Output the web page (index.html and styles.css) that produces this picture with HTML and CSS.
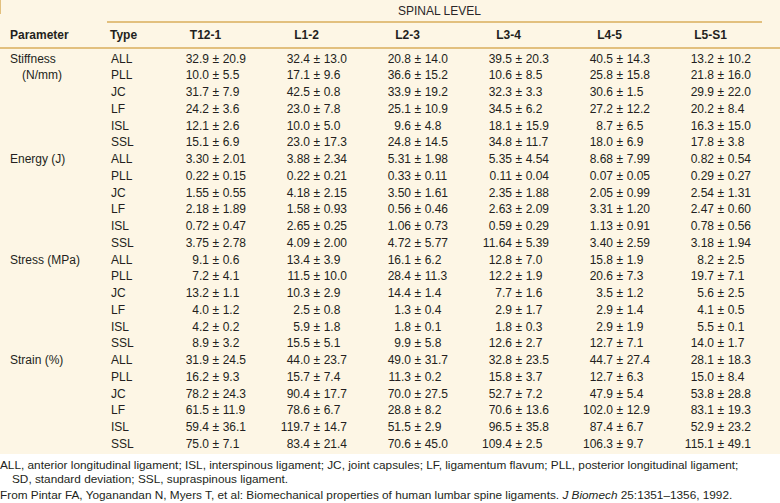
FILE: index.html
```html
<!DOCTYPE html>
<html lang="en">
<head>
<meta charset="utf-8">
<title>Spinal ligament properties</title>
<link rel="stylesheet" href="styles.css">
</head>
<body>
<div class="panel">
  <div class="spine-head">
    <span class="tick"></span>
    <div class="spine-rule"><span class="spine-title">SPINAL LEVEL</span></div>
  </div>
  <div class="grid head-row">
    <div class="h left">Parameter</div>
    <div class="h type">Type</div>
    <div class="h">T12-1</div>
    <div class="h">L1-2</div>
    <div class="h">L2-3</div>
    <div class="h">L3-4</div>
    <div class="h">L4-5</div>
    <div class="h">L5-S1</div>
  </div>
  <div class="grid body" id="body"></div>
</div>
<div class="notes">
  <p class="hang">ALL, anterior longitudinal ligament; ISL, interspinous ligament; JC, joint capsules; LF, ligamentum flavum; PLL, posterior longitudinal ligament;<br>SD, standard deviation; SSL, supraspinous ligament.</p>
  <p class="src">From Pintar FA, Yoganandan N, Myers T, et al: Biomechanical properties of human lumbar spine ligaments. <i>J Biomech</i> 25:1351&ndash;1356, 1992.</p>
</div>
<script src="app.js"></script>
</body>
</html>
```

FILE: app.js
```js
var data = [
  ["Stiffness (N/mm)", [
    ["ALL", "32.9 20.9|32.4 13.0|20.8 14.0|39.5 20.3|40.5 14.3|13.2 10.2"],
    ["PLL", "10.0 5.5|17.1 9.6|36.6 15.2|10.6 8.5|25.8 15.8|21.8 16.0"],
    ["JC", "31.7 7.9|42.5 0.8|33.9 19.2|32.3 3.3|30.6 1.5|29.9 22.0"],
    ["LF", "24.2 3.6|23.0 7.8|25.1 10.9|34.5 6.2|27.2 12.2|20.2 8.4"],
    ["ISL", "12.1 2.6|10.0 5.0|9.6 4.8|18.1 15.9|8.7 6.5|16.3 15.0"],
    ["SSL", "15.1 6.9|23.0 17.3|24.8 14.5|34.8 11.7|18.0 6.9|17.8 3.8"]
  ]],
  ["Energy (J)", [
    ["ALL", "3.30 2.01|3.88 2.34|5.31 1.98|5.35 4.54|8.68 7.99|0.82 0.54"],
    ["PLL", "0.22 0.15|0.22 0.21|0.33 0.11|0.11 0.04|0.07 0.05|0.29 0.27"],
    ["JC", "1.55 0.55|4.18 2.15|3.50 1.61|2.35 1.88|2.05 0.99|2.54 1.31"],
    ["LF", "2.18 1.89|1.58 0.93|0.56 0.46|2.63 2.09|3.31 1.20|2.47 0.60"],
    ["ISL", "0.72 0.47|2.65 0.25|1.06 0.73|0.59 0.29|1.13 0.91|0.78 0.56"],
    ["SSL", "3.75 2.78|4.09 2.00|4.72 5.77|11.64 5.39|3.40 2.59|3.18 1.94"]
  ]],
  ["Stress (MPa)", [
    ["ALL", "9.1 0.6|13.4 3.9|16.1 6.2|12.8 7.0|15.8 1.9|8.2 2.5"],
    ["PLL", "7.2 4.1|11.5 10.0|28.4 11.3|12.2 1.9|20.6 7.3|19.7 7.1"],
    ["JC", "13.2 1.1|10.3 2.9|14.4 1.4|7.7 1.6|3.5 1.2|5.6 2.5"],
    ["LF", "4.0 1.2|2.5 0.8|1.3 0.4|2.9 1.7|2.9 1.4|4.1 0.5"],
    ["ISL", "4.2 0.2|5.9 1.8|1.8 0.1|1.8 0.3|2.9 1.9|5.5 0.1"],
    ["SSL", "8.9 3.2|15.5 5.1|9.9 5.8|12.6 2.7|12.7 7.1|14.0 1.7"]
  ]],
  ["Strain (%)", [
    ["ALL", "31.9 24.5|44.0 23.7|49.0 31.7|32.8 23.5|44.7 27.4|28.1 18.3"],
    ["PLL", "16.2 9.3|15.7 7.4|11.3 0.2|15.8 3.7|12.7 6.3|15.0 8.4"],
    ["JC", "78.2 24.3|90.4 17.7|70.0 27.5|52.7 7.2|47.9 5.4|53.8 28.8"],
    ["LF", "61.5 11.9|78.6 6.7|28.8 8.2|70.6 13.6|102.0 12.9|83.1 19.3"],
    ["ISL", "59.4 36.1|119.7 14.7|51.5 2.9|96.5 35.8|87.4 6.7|52.9 23.2"],
    ["SSL", "75.0 7.1|83.4 21.4|70.6 45.0|109.4 2.5|106.3 9.7|115.1 49.1"]
  ]]
];

var body = document.getElementById("body");
data.forEach(function (group) {
  var label = document.createElement("div");
  label.className = "param";
  label.textContent = group[0];
  body.appendChild(label);
  group[1].forEach(function (row) {
    var t = document.createElement("div");
    t.className = "type";
    t.textContent = row[0];
    body.appendChild(t);
    row[1].split("|").forEach(function (cell) {
      var parts = cell.split(" ");
      var v = document.createElement("div");
      v.className = "v";
      var l = document.createElement("span");
      l.className = "l";
      l.textContent = parts[0];
      var pm = document.createElement("span");
      pm.className = "pm";
      pm.textContent = "\u00b1";
      var r = document.createElement("span");
      r.className = "r";
      r.textContent = parts[1];
      v.appendChild(l);
      v.appendChild(pm);
      v.appendChild(r);
      body.appendChild(v);
    });
  });
});
```

FILE: styles.css
```css
html, body {
  margin: 0;
  padding: 0;
  background: #ffffff;
}
body {
  width: 780px;
  font-family: "Liberation Sans", Arial, sans-serif;
  color: #231f20;
  font-size: 12px;
}
.panel {
  background: #fdf6e5;
  padding-bottom: 1px;
}
.spine-head {
  display: flex;
  height: 23px;
}
.tick {
  width: 1px;
  height: 14px;
  background: #e2c07e;
}
.spine-rule {
  margin-left: 106px;
  width: 655px;
  border-bottom: 2px solid #e2c07e;
  box-sizing: border-box;
  height: 23px;
}
.spine-title {
  display: block;
  padding-left: 291px;
  line-height: 22px;
  color: #2a2627;
}
.grid {
  display: grid;
  grid-template-columns: 107px 48px repeat(6, 101px);
}
.head-row {
  height: 24px;
  border-bottom: 2px solid #e2c07e;
  align-items: center;
  font-weight: bold;
}
.h {
  text-align: center;
}
.h.left {
  text-align: left;
  padding-left: 10px;
}
.h.type {
  text-align: left;
  padding-left: 3px;
}
.body {
  grid-auto-rows: 16.75px;
  padding-top: 1.5px;
  line-height: 16.75px;
}
.param {
  grid-column: 1;
  grid-row: span 6;
  padding-left: 22px;
  text-indent: -12px;
  width: 68px;
}
.type {
  grid-column: 2;
  padding-left: 4px;
}
.v {
  display: flex;
  white-space: nowrap;
}
.l {
  width: 54px;
  text-align: right;
}
.pm {
  width: 13.7px;
  text-align: center;
}
.notes {
  font-size: 11.8px;
  line-height: 14px;
  padding-top: 4px;
}
.notes p {
  margin: 0;
}
.hang {
  padding-left: 12px;
  text-indent: -12px;
}
.notes .src {
  margin-top: 2px;
}
```
